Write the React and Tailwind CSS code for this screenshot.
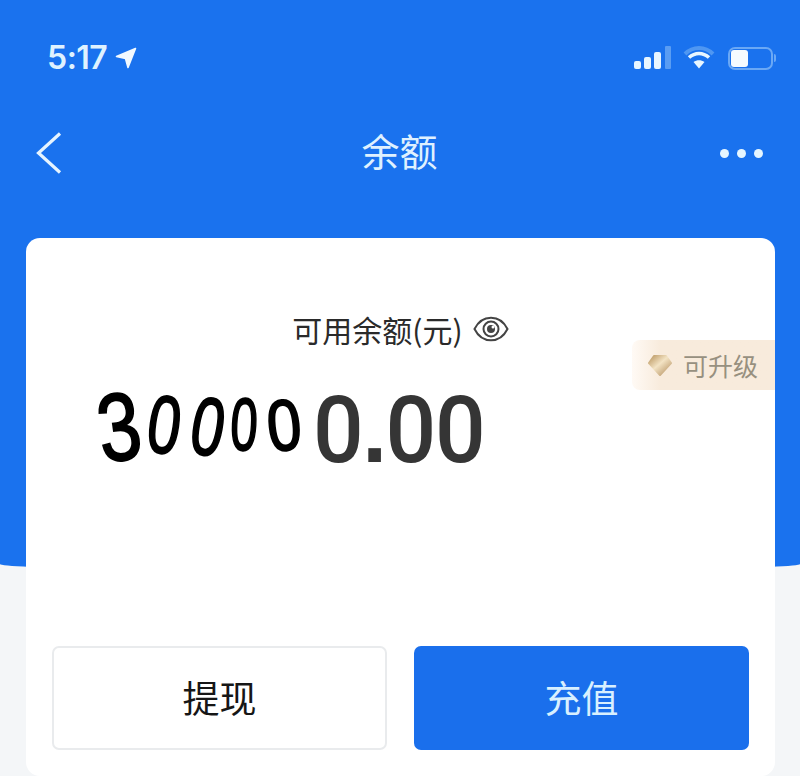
export default function App() {
  const cjk = "font-['Noto_Sans_CJK_SC','Noto_Sans',sans-serif]";
  return (
    <div className={`w-[800px] h-[776px] overflow-hidden bg-[#f4f6f8] ${cjk}`}>
      <div className="h-[572px] bg-[#1a72ee] rounded-b-[50%_8px] flex flex-col">
        {/* status bar */}
        <div className="h-[116px] flex items-start justify-between pl-[47px] pr-[24px] pt-[38px] shrink-0">
          <div className="flex items-center gap-[8px] h-[40px]">
            <span className="font-['Inter',sans-serif] font-semibold text-[32px] leading-[40px] tracking-[-0.5px] text-[#dff2ff]">5:17</span>
            <svg width="22" height="22" viewBox="0 0 22 22">
              <path d="M20.5 1.5 L1.5 9.5 L10.5 11.5 L13 20.5 Z" fill="#f2f9ff" stroke="#f2f9ff" strokeWidth="1.6" strokeLinejoin="round" />
            </svg>
          </div>
          <div className="flex items-center h-[40px]">
            <svg width="38" height="24" viewBox="0 0 38 24" className="mr-[11px] -translate-y-[1px]">
              <rect x="0" y="16" width="7" height="8" rx="2" fill="#e8f6ff" />
              <rect x="10" y="12" width="7" height="12" rx="2" fill="#e8f6ff" />
              <rect x="20" y="7" width="7" height="17" rx="2" fill="#e8f6ff" />
              <rect x="31" y="1" width="6" height="23" rx="1" fill="#5a9df3" />
            </svg>
            <svg width="32" height="24" viewBox="0 0 32 24" className="mr-[13px]">
              <path d="M2 8 C10 0 22 0 30 8" fill="none" stroke="#4f97f2" strokeWidth="4" />
              <path d="M6 11.5 C12 6 20 6 26 11.5" fill="none" stroke="#e8f6ff" strokeWidth="3.5" />
              <path d="M10.5 16 C14 13.5 18 13.5 21.5 16 L16 22.5 Z" fill="#e8f6ff" />
            </svg>
            <div className="w-[45px] h-[23px] rounded-[7px] border-2 border-[#6aa8f5] p-[1px] flex">
              <div className="w-[17px] h-full rounded-[3px] bg-[#f5fbff]" />
            </div>
            <div className="w-[2px] h-[8px] bg-[#6aa8f5] rounded-r ml-[1px]" />
          </div>
        </div>
        {/* nav */}
        <div className="h-[74px] flex items-center pl-[36px] pr-[37px] shrink-0">
          <div className="flex-1">
            <svg width="26" height="42" viewBox="0 0 26 42" className="block">
              <path d="M24 1.5 L2.5 21 L24 40.5" fill="none" stroke="#e6f4ff" strokeWidth="3.2" />
            </svg>
          </div>
          <span className="text-[38px] leading-[50px] pb-[6px] text-[#dff1ff] font-normal">余额</span>
          <div className="flex-1 flex justify-end gap-[8px]">
            <div className="w-[9px] h-[9px] rounded-full bg-[#e6f6ff]" />
            <div className="w-[9px] h-[9px] rounded-full bg-[#e6f6ff]" />
            <div className="w-[9px] h-[9px] rounded-full bg-[#e6f6ff]" />
          </div>
        </div>
        <div className="h-[48px] shrink-0" />
        {/* card */}
        <div className="mx-[26px] w-[749px] h-[538px] shrink-0 bg-white rounded-[14px] flex flex-col">
          <div className="pt-[72px] flex items-center justify-center h-[110px] gap-[10px] shrink-0">
            <span className="text-[30px] leading-[40px] text-[#2a2a2a]">可用余额(元)</span>
            <svg width="36" height="28" viewBox="0 0 36 28">
              <path d="M1.5 14 C9 -1 27 -1 34.5 14 C27 29 9 29 1.5 14 Z" fill="none" stroke="#444" strokeWidth="2" />
              <circle cx="18" cy="14" r="7.5" fill="none" stroke="#444" strokeWidth="2" />
              <circle cx="18" cy="14" r="4" fill="#444" />
              <circle cx="20" cy="12" r="1.5" fill="#fff" />
            </svg>
          </div>
          <div className="flex items-start justify-between h-[298px] shrink-0">
            <div className="flex items-center pl-[70px] pt-[30px] text-black font-['Liberation_Sans',sans-serif] h-[130px]">
              <span className="w-[46px] inline-flex justify-center text-[96px] leading-[90px] [-webkit-text-stroke:2px_black] -rotate-[8deg] scale-x-[0.8] -translate-y-[1px]">3</span>
              <span className="w-[45px] inline-flex justify-center text-[82px] leading-[90px] [-webkit-text-stroke:2px_black] rotate-[8deg] scale-x-[0.72] -translate-y-[3px]">0</span>
              <span className="w-[42px] inline-flex justify-center text-[82px] leading-[90px] [-webkit-text-stroke:2px_black] rotate-[10deg] scale-x-[0.72] -translate-y-[1px]">0</span>
              <span className="w-[30px] inline-flex justify-center text-[74px] leading-[90px] [-webkit-text-stroke:2px_black] rotate-[3deg] scale-x-[0.66] -translate-y-[3px]">0</span>
              <span className="w-[46px] inline-flex justify-center text-[72px] leading-[90px] [-webkit-text-stroke:2px_black] -rotate-[6deg] scale-x-[0.85] translate-x-[2px] -translate-y-[3px]">0</span>
              <span className="inline-block font-['Roboto',sans-serif] font-medium text-[92px] leading-[90px] text-[#353535] ml-[8px] tracking-[-1.5px] scale-x-[0.97] origin-left translate-y-[2px]">0<span className="font-['Liberation_Sans',sans-serif] font-bold">.</span>00</span>
            </div>
            <div className="mt-[-8px] w-[143px] h-[50px] rounded-l-[8px] bg-gradient-to-r from-[#fffaf5] via-[#f8ebdc] via-20% to-[#f8ebdc] flex items-center pl-[15px] gap-[10px]">
              <svg width="26" height="26" viewBox="0 0 26 26">
                <defs>
                  <linearGradient id="d" x1="0" y1="0" x2="1" y2="1">
                    <stop offset="0" stopColor="#b9955f" />
                    <stop offset="0.45" stopColor="#f3e3c4" />
                    <stop offset="1" stopColor="#b08a58" />
                  </linearGradient>
                </defs>
                <path d="M7 4 L19 4 L24 11 L13 23 L2 11 Z" fill="url(#d)" stroke="url(#d)" strokeWidth="2" strokeLinejoin="round" />
              </svg>
              <span className="text-[25px] leading-[32px] text-[#97907f]">可升级</span>
            </div>
          </div>
          {/* buttons */}
          <div className="flex gap-[27px] px-[26px] shrink-0">
            <div className="w-[335px] h-[104px] rounded-[7px] border-2 border-[#e9ebed] bg-white flex items-center justify-center text-[37px] text-[#161616]">提现</div>
            <div className="w-[335px] h-[104px] rounded-[7px] bg-[#1a6fec] flex items-center justify-center text-[37px] text-[#d8f0ff]">充值</div>
          </div>
        </div>
      </div>
    </div>
  );
}
